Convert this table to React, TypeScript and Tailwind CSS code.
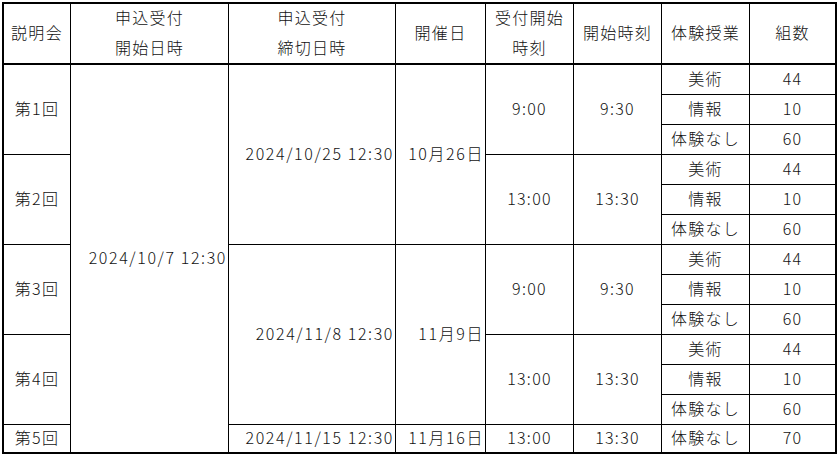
import React from "react";

type CellProps = {
  className?: string;
  align?: "center" | "right";
  children?: React.ReactNode;
};

const Cell = ({ className = "", align = "center", children }: CellProps) => (
  <div
    className={`flex items-center bg-white pb-[4px] whitespace-nowrap ${
      align === "right" ? "justify-end pr-[1px] tracking-[1.6px]" : "justify-center"
    } ${className}`}
  >
    {children}
  </div>
);

const sessions = [
  { label: "第1回", rows: "row-start-2 row-span-3", start: "9:00", time: "9:30" },
  { label: "第2回", rows: "row-start-5 row-span-3", start: "13:00", time: "13:30" },
  { label: "第3回", rows: "row-start-8 row-span-3", start: "9:00", time: "9:30" },
  { label: "第4回", rows: "row-start-11 row-span-3", start: "13:00", time: "13:30" },
];

const courseRows = [
  "row-start-2", "row-start-3", "row-start-4",
  "row-start-5", "row-start-6", "row-start-7",
  "row-start-8", "row-start-9", "row-start-10",
  "row-start-11", "row-start-12", "row-start-13",
];

const courses = [
  { name: "美術", count: "44" },
  { name: "情報", count: "10" },
  { name: "体験なし", count: "60" },
];

const deadlines = [
  { rows: "row-start-2 row-span-6", close: "2024/10/25 12:30", day: "10月26日" },
  { rows: "row-start-8 row-span-6", close: "2024/11/8 12:30", day: "11月9日" },
];

export default function App() {
  return (
    <div className="h-[456px] w-[838px] bg-white pl-[2px] pt-[2px] font-['Noto_Sans_CJK_JP','Noto_Sans',sans-serif] text-[16px] font-light leading-[30px] tracking-[1.3px] text-[#111]">
      <div className="h-[452px] w-[835px] border-2 border-black bg-black">
        <div className="grid grid-cols-[66px_157px_166px_89px_87px_87px_87px_85px] grid-rows-[60px_repeat(12,29px)_27px] gap-px">
          {/* header */}
          <Cell className="col-start-1 row-start-1 mb-px">説明会</Cell>
          <Cell className="col-start-2 row-start-1 mb-px flex-col">
            <span>申込受付</span>
            <span>開始日時</span>
          </Cell>
          <Cell className="col-start-3 row-start-1 mb-px flex-col">
            <span>申込受付</span>
            <span>締切日時</span>
          </Cell>
          <Cell className="col-start-4 row-start-1 mb-px">開催日</Cell>
          <Cell className="col-start-5 row-start-1 mb-px flex-col">
            <span>受付開始</span>
            <span>時刻</span>
          </Cell>
          <Cell className="col-start-6 row-start-1 mb-px">開始時刻</Cell>
          <Cell className="col-start-7 row-start-1 mb-px">体験授業</Cell>
          <Cell className="col-start-8 row-start-1 mb-px">組数</Cell>

          {/* sessions 1-4 */}
          {sessions.map((s) => (
            <React.Fragment key={s.label}>
              <Cell className={`col-start-1 ${s.rows}`}>{s.label}</Cell>
              <Cell className={`col-start-5 ${s.rows}`}>{s.start}</Cell>
              <Cell className={`col-start-6 ${s.rows}`}>{s.time}</Cell>
            </React.Fragment>
          ))}

          <Cell align="right" className="col-start-2 row-start-2 row-span-13">
            2024/10/7 12:30
          </Cell>

          {deadlines.map((d) => (
            <React.Fragment key={d.close}>
              <Cell align="right" className={`col-start-3 ${d.rows}`}>
                {d.close}
              </Cell>
              <Cell align="right" className={`col-start-4 ${d.rows}`}>
                {d.day}
              </Cell>
            </React.Fragment>
          ))}

          {courseRows.map((r, i) => (
            <React.Fragment key={r}>
              <Cell className={`col-start-7 ${r}`}>{courses[i % 3].name}</Cell>
              <Cell className={`col-start-8 ${r}`}>{courses[i % 3].count}</Cell>
            </React.Fragment>
          ))}

          {/* session 5 */}
          <Cell className="col-start-1 row-start-14">第5回</Cell>
          <Cell align="right" className="col-start-3 row-start-14">
            2024/11/15 12:30
          </Cell>
          <Cell align="right" className="col-start-4 row-start-14">
            11月16日
          </Cell>
          <Cell className="col-start-5 row-start-14">13:00</Cell>
          <Cell className="col-start-6 row-start-14">13:30</Cell>
          <Cell className="col-start-7 row-start-14">体験なし</Cell>
          <Cell className="col-start-8 row-start-14">70</Cell>
        </div>
      </div>
    </div>
  );
}
